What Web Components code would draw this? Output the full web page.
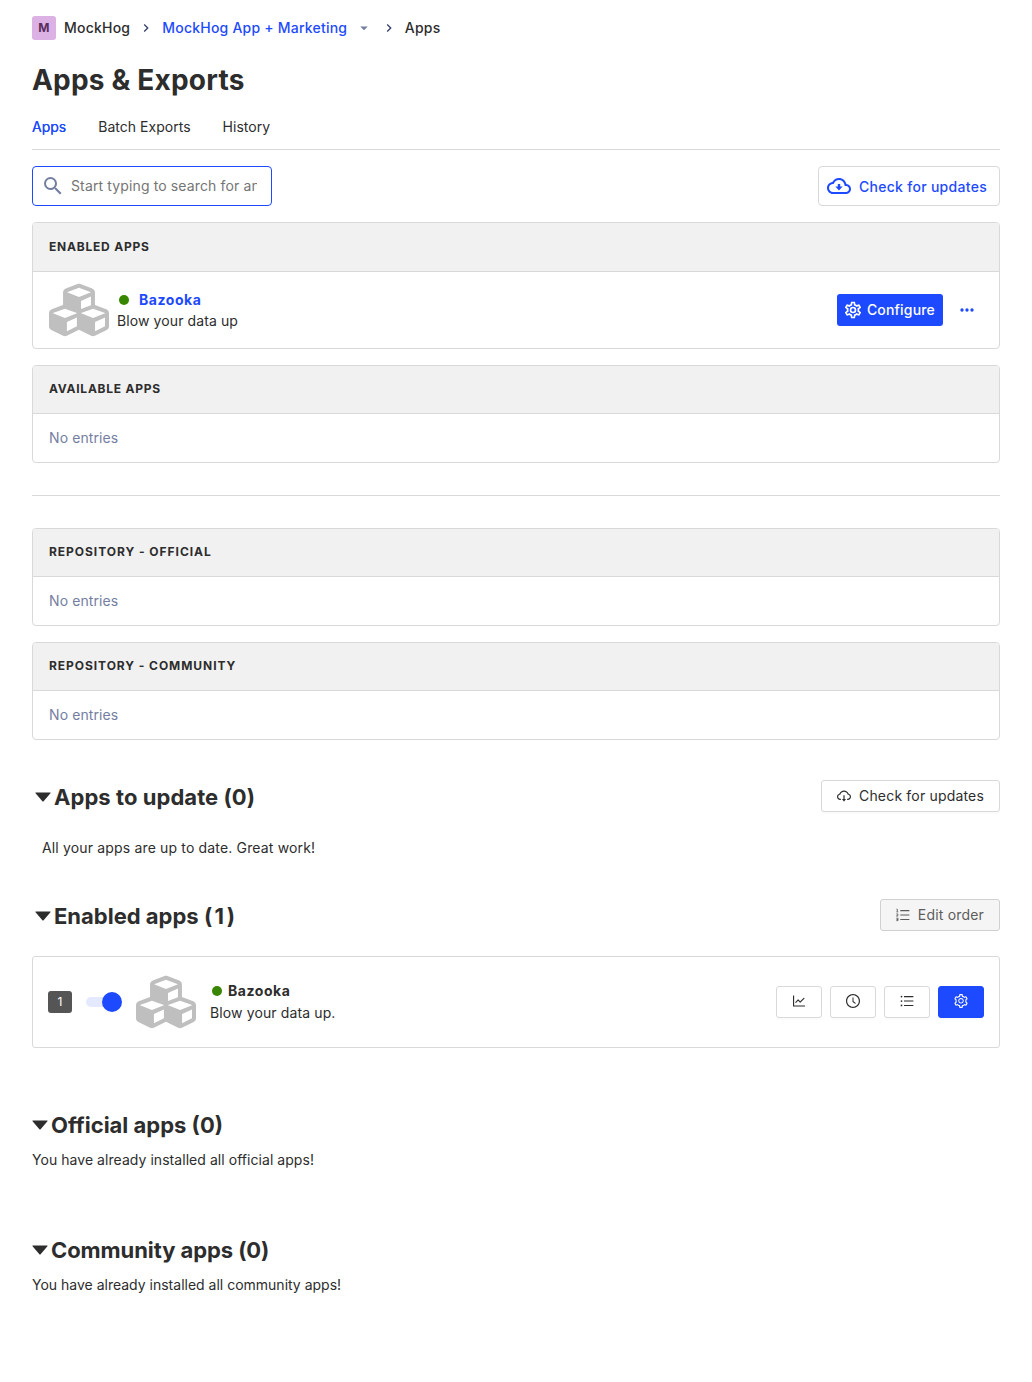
<!DOCTYPE html>
<html lang="en">
<head>
<meta charset="utf-8">
<title>Apps &amp; Exports</title>
<style>
  html { background: #fff; }
  body {
    margin: 0;
    font: 400 14px/20px Inter, "Liberation Sans", sans-serif;
    color: #2d2d2d;
    --blue: #1d4aff;
    --border: #d9d9d9;
    --muted: #747ea1;
  }
</style>
</head>
<body>
<apps-scene></apps-scene>

<script>
const define = (name, html, setup) => {
  const template = document.createElement('template');
  template.innerHTML = html;
  customElements.define(name, class extends HTMLElement {
    constructor() {
      super();
      this.attachShadow({ mode: 'open' }).append(template.content.cloneNode(true));
    }
    connectedCallback() { if (setup) setup(this, this.shadowRoot); }
  });
};

const ICONS = {
  chevron: ['0 0 24 24', '<path d="M8.6 16.6 13.2 12 8.6 7.4 10 6l6 6-6 6z"/>'],
  dropdown: ['0 0 24 24', '<path d="M7 10l5 5 5-5z"/>'],
  search: ['0 0 24 24', '<path d="M9.5 3A6.5 6.5 0 0 1 16 9.5c0 1.61-.59 3.09-1.56 4.23l.27.27h.79l5 5-1.5 1.5-5-5v-.79l-.27-.27A6.52 6.52 0 0 1 9.5 16a6.5 6.5 0 1 1 0-13m0 2C7 5 5 7 5 9.5S7 14 9.5 14 14 12 14 9.5 12 5 9.5 5z"/>'],
  cloud: ['0 0 24 24', '<path d="M19.35 10.04C18.67 6.59 15.64 4 12 4 9.11 4 6.6 5.64 5.35 8.04 2.34 8.36 0 10.91 0 14c0 3.31 2.69 6 6 6h13c2.76 0 5-2.24 5-5 0-2.64-2.05-4.78-4.65-4.96zM19 18H6c-2.21 0-4-1.79-4-4 0-2.05 1.53-3.76 3.56-3.97l1.07-.11.5-.95C8.08 7.14 9.94 6 12 6c2.62 0 4.88 1.86 5.39 4.43l.3 1.5 1.53.11c1.56.1 2.78 1.41 2.78 2.96 0 1.65-1.35 3-3 3z"/><path d="M13.2 10h-2.4v2.6H8.4L12 16.4l3.6-3.8h-2.4z"/>'],
  cog: ['0 0 24 24', '<path d="M12,8A4,4 0 0,1 16,12A4,4 0 0,1 12,16A4,4 0 0,1 8,12A4,4 0 0,1 12,8M12,10A2,2 0 0,0 10,12A2,2 0 0,0 12,14A2,2 0 0,0 14,12A2,2 0 0,0 12,10M10,22C9.75,22 9.54,21.82 9.5,21.58L9.13,18.93C8.5,18.68 7.96,18.34 7.44,17.94L4.95,18.95C4.73,19.03 4.46,18.95 4.34,18.73L2.34,15.27C2.21,15.05 2.27,14.78 2.46,14.63L4.57,12.97L4.5,12L4.57,11L2.46,9.37C2.27,9.22 2.21,8.95 2.34,8.73L4.34,5.27C4.46,5.05 4.73,4.96 4.95,5.05L7.44,6.05C7.96,5.66 8.5,5.32 9.13,5.07L9.5,2.42C9.54,2.18 9.75,2 10,2H14C14.25,2 14.46,2.18 14.5,2.42L14.87,5.07C15.5,5.32 16.04,5.66 16.56,6.05L19.05,5.05C19.27,4.96 19.54,5.05 19.66,5.27L21.66,8.73C21.79,8.95 21.73,9.22 21.54,9.37L19.43,11L19.5,12L19.43,13L21.54,14.63C21.73,14.78 21.79,15.05 21.66,15.27L19.66,18.73C19.54,18.95 19.27,19.04 19.05,18.95L16.56,17.95C16.04,18.34 15.5,18.68 14.87,18.93L14.5,21.58C14.46,21.82 14.25,22 14,22H10M11.25,4L10.88,6.61C9.68,6.86 8.62,7.5 7.85,8.39L5.44,7.35L4.69,8.65L6.8,10.2C6.4,11.37 6.4,12.64 6.8,13.8L4.68,15.36L5.43,16.66L7.86,15.62C8.63,16.5 9.68,17.14 10.87,17.38L11.24,20H12.76L13.13,17.39C14.32,17.14 15.37,16.5 16.14,15.62L18.57,16.66L19.32,15.36L17.2,13.81C17.6,12.64 17.6,11.37 17.2,10.2L19.31,8.65L18.56,7.35L16.15,8.39C15.38,7.5 14.32,6.86 13.12,6.62L12.75,4H11.25Z"/>'],
  more: ['0 0 24 24', '<circle cx="6" cy="12" r="2"/><circle cx="12" cy="12" r="2"/><circle cx="18" cy="12" r="2"/>'],
  cubes: ['0 0 512 512', '<path d="M488.6 250.2L392 214V105.5c0-15-9.3-28.4-23.4-33.7l-100-37.5c-8.1-3.1-17.1-3.1-25.3 0l-100 37.5c-14.1 5.3-23.4 18.7-23.4 33.7V214l-96.6 36.2C9.3 255.5 0 268.9 0 283.9V394c0 13.6 7.7 26.1 19.9 32.2l100 50c10.1 5.1 22.1 5.1 32.2 0l103.9-52 103.9 52c10.1 5.1 22.1 5.1 32.2 0l100-50c12.2-6.1 19.9-18.6 19.9-32.2V283.9c0-15-9.3-28.4-23.4-33.7zM358 214.8l-85 31.9v-68.2l85-37v73.3zM154 104.1l102-38.2 102 38.2v.6l-102 41.4-102-41.4v-.6zm84 291.1l-85 42.5v-79.1l85-38.8v75.4zm0-112l-102 41.4-102-41.4v-.6l102-38.2 102 38.2v.6zm240 112l-85 42.5v-79.1l85-38.8v75.4zm0-112l-102 41.4-102-41.4v-.6l102-38.2 102 38.2v.6z"/>'],
  caret: ['0 0 1024 1024', '<path d="M840.4 300H183.6c-19.7 0-30.7 20.8-18.5 35l328.4 380.8c9.4 10.9 27.5 10.9 37 0L858.9 335c12.2-14.2 1.2-35-18.5-35z"/>'],
  cloudThin: ['64 64 896 896', '<path d="M624 706.3h-74.1V464c0-4.4-3.6-8-8-8h-60c-4.4 0-8 3.6-8 8v242.3H400c-6.7 0-10.4 7.7-6.3 12.9l112 141.7a8 8 0 0012.6 0l112-141.7c4.1-5.2.4-12.9-6.3-12.9z"/><path d="M811.4 366.7C765.6 245.9 648.9 160 512.2 160S258.8 245.8 213 366.6C127.3 389.1 64 467.2 64 560c0 110.5 89.5 200 199.9 200H304c4.4 0 8-3.6 8-8v-60c0-4.4-3.6-8-8-8h-40.1c-33.7 0-65.4-13.4-89-37.7-23.5-24.2-36-56.8-34.9-90.6.9-26.4 9.9-51.2 26.2-72.1 16.7-21.3 40.1-36.8 66.1-43.7l37.9-9.9 13.9-36.6c8.6-22.8 20.6-44.1 35.7-63.4a245.6 245.6 0 0152.4-49.9c41.1-28.9 89.5-44.2 140-44.2s98.9 15.3 140 44.2c19.9 14 37.5 30.8 52.4 49.9 15.1 19.3 27.1 40.7 35.7 63.4l13.8 36.5 37.8 10C846.1 454.5 884 503.8 884 560c0 33.1-12.9 64.3-36.3 87.7a123.07 123.07 0 01-87.6 36.3H720c-4.4 0-8 3.6-8 8v60c0 4.4 3.6 8 8 8h40.1C870.5 760 960 670.5 960 560c0-92.7-63.1-170.7-148.6-193.3z"/>'],
  ordered: ['64 64 896 896', '<path d="M336 192h584v72H336zM336 476h584v72H336zM336 760h584v72H336z"/><path fill="none" stroke="currentColor" stroke-width="54" d="M92 140h56v160M84 310h124M84 446h104v60l-96 68h120M84 718h110v76h-86 86v78h-110"/>'],
  chart: ['64 64 896 896', '<path d="M888 792H200V168c0-4.4-3.6-8-8-8h-56c-4.4 0-8 3.6-8 8v688c0 4.4 3.6 8 8 8h752c4.4 0 8-3.6 8-8v-56c0-4.4-3.6-8-8-8zM305.8 637.7c3.1 3.1 8.1 3.1 11.3 0l138.3-137.6L583 628.5c3.1 3.1 8.2 3.1 11.3 0l275.4-275.3c3.1-3.1 3.1-8.2 0-11.3l-39.6-39.6a8.03 8.03 0 00-11.3 0l-230 229.9L461.4 404a8.03 8.03 0 00-11.3 0L266.3 586.7a8.03 8.03 0 000 11.3l39.5 39.7z"/>'],
  clock: ['64 64 896 896', '<path d="M512 64C264.6 64 64 264.6 64 512s200.6 448 448 448 448-200.6 448-448S759.4 64 512 64zm0 820c-205.4 0-372-166.6-372-372s166.6-372 372-372 372 166.6 372 372-166.6 372-372 372z"/><path d="M686.7 638.6L544.1 535.5V288c0-4.4-3.6-8-8-8H488c-4.4 0-8 3.6-8 8v275.4c0 2.6 1.2 5 3.3 6.5l165.4 120.6c3.6 2.6 8.6 1.8 11.2-1.7l28.6-39c2.6-3.7 1.8-8.7-1.8-11.2z"/>'],
  list: ['64 64 896 896', '<path d="M320 192h600v72H320zM320 476h600v72H320zM320 760h600v72H320z"/><circle cx="160" cy="228" r="56"/><circle cx="160" cy="512" r="56"/><circle cx="160" cy="796" r="56"/>'],
  gear: ['64 64 896 896', '<path d="M924.8 625.7l-65.5-56c3.1-19 4.7-38.4 4.7-57.8s-1.6-38.8-4.7-57.8l65.5-56a32.03 32.03 0 009.3-35.2l-.9-2.6a443.74 443.74 0 00-79.7-137.9l-1.8-2.1a32.12 32.12 0 00-35.1-9.5l-81.3 28.9c-30-24.6-63.5-44-99.7-57.6l-15.7-85a32.05 32.05 0 00-25.8-25.7l-2.7-.5c-52.1-9.4-106.9-9.4-159 0l-2.7.5a32.05 32.05 0 00-25.8 25.7l-15.8 85.4a351.86 351.86 0 00-99 57.4l-81.9-29.1a32 32 0 00-35.1 9.5l-1.8 2.1a446.02 446.02 0 00-79.7 137.9l-.9 2.6c-4.5 12.5-.8 26.5 9.3 35.2l66.3 56.6c-3.1 18.8-4.6 38-4.6 57.1 0 19.2 1.5 38.4 4.6 57.1L99 625.5a32.03 32.03 0 00-9.3 35.2l.9 2.6c18.1 50.4 44.9 96.9 79.7 137.9l1.8 2.1a32.12 32.12 0 0035.1 9.5l81.9-29.1c29.8 24.5 63.1 43.9 99 57.4l15.8 85.4a32.05 32.05 0 0025.8 25.7l2.7.5a449.4 449.4 0 00159 0l2.7-.5a32.05 32.05 0 0025.8-25.7l15.7-85a350 350 0 0099.7-57.6l81.3 28.9a32 32 0 0035.1-9.5l1.8-2.1c34.8-41.1 61.6-87.5 79.7-137.9l.9-2.6c4.5-12.3.8-26.3-9.3-35zM788.3 465.9c2.5 15.1 3.8 30.6 3.8 46.1s-1.3 31-3.8 46.1l-6.6 40.1 74.7 63.9a370.03 370.03 0 01-42.6 73.6L721 702.8l-31.4 25.8c-23.9 19.6-50.5 35-79.3 45.8l-38.1 14.3-17.9 97a377.5 377.5 0 01-85 0l-17.9-97.2-37.8-14.5c-28.5-10.8-55-26.2-78.7-45.7l-31.4-25.9-93.4 33.2c-17-22.9-31.2-47.6-42.6-73.6l75.5-64.5-6.5-40c-2.4-14.9-3.7-30.3-3.7-45.5 0-15.3 1.2-30.6 3.7-45.5l6.5-40-75.5-64.5c11.3-26.1 25.6-50.7 42.6-73.6l93.4 33.2 31.4-25.9c23.7-19.5 50.2-34.9 78.7-45.7l37.9-14.3 17.9-97.2c28.1-3.2 56.8-3.2 85 0l17.9 97 38.1 14.3c28.7 10.8 55.4 26.2 79.3 45.8l31.4 25.8 92.8-32.9c17 22.9 31.2 47.6 42.6 73.6L781.8 426l6.5 39.9zM512 326c-97.2 0-176 78.8-176 176s78.8 176 176 176 176-78.8 176-176-78.8-176-176-176zm79.2 255.2A111.6 111.6 0 01512 614c-29.9 0-58-11.7-79.2-32.8A111.6 111.6 0 01400 502c0-29.9 11.7-58 32.8-79.2C454 401.6 482.1 390 512 390c29.9 0 58 11.6 79.2 32.8A111.6 111.6 0 01624 502c0 29.9-11.7 58-32.8 79.2z"/>']
};

define('ui-icon', `<style>
  :host { display: inline-flex; flex: none; }
  svg { display: block; fill: currentColor; }
</style>`, (el, root) => {
  const [box, body] = ICONS[el.getAttribute('name')];
  const size = el.getAttribute('size') || 14;
  root.innerHTML += `<svg viewBox="${box}" width="${size}" height="${size}" aria-hidden="true">${body}</svg>`;
});

define('bread-crumbs', `<style>
  :host { display: flex; align-items: center; height: 24px; font-weight: 500; letter-spacing: .22px; }
  .badge { width: 24px; height: 24px; border-radius: 3px; background: #dcb1e3; color: #572e5e;
    font: 700 12px/24px Inter, sans-serif; text-align: center; margin-right: 8px; }
  .sep { color: #35416b; margin: 0 8px; }
  .link { color: var(--blue); }
  .drop { color: var(--muted); margin: 0 -.5px 0 8px; }
</style>
<span class="badge">M</span><span>MockHog</span>
<ui-icon class="sep" name="chevron" size="16"></ui-icon>
<span class="link">MockHog App + Marketing</span>
<ui-icon class="drop" name="dropdown" size="18"></ui-icon>
<ui-icon class="sep" name="chevron" size="16"></ui-icon>
<span>Apps</span>`);

define('tab-bar', `<style>
  :host { display: flex; gap: 32px; height: 44px; align-items: center; border-bottom: 1px solid var(--border); letter-spacing: .02px; }
  ::slotted([active]) { color: var(--blue); text-shadow: 0 0 .25px currentColor; }
</style><slot></slot>`);

define('search-field', `<style>
  :host { display: flex; align-items: center; box-sizing: border-box; width: 240px; height: 40px;
    border: 1px solid var(--blue); border-radius: 4px; padding: 0 14px 0 8px; }
  ui-icon { color: var(--muted); margin-right: 6px; }
  input { flex: 1; min-width: 0; border: 0; padding: 0; outline: 0; background: none; font: inherit; color: inherit; letter-spacing: .13px; }
  input::placeholder { color: #757575; opacity: 1; }
</style><ui-icon name="search" size="24"></ui-icon><input placeholder="Start typing to search for an app">`);

define('lemon-button', `<style>
  :host { display: inline-flex; align-items: center; box-sizing: border-box; height: 40px; gap: 8px;
    padding: 1px 12px 0 8px; border: 1px solid var(--border); border-radius: 4px; color: var(--blue); font-weight: 500; letter-spacing: .29px; }
  :host([kind=primary]) { height: 32px; gap: 4px; padding: 0 8px 0 6px; border: 0; border-radius: 3px; background: var(--blue); color: #fff; letter-spacing: .18px; }
  :host([kind=more]) { height: 32px; border: 0; padding: 0 6px; margin-left: 8px; }
  ::slotted(ui-icon[name=cloud]) { margin-bottom: 2px; }
</style><slot></slot>`);

define('ant-button', `<style>
  :host { display: inline-flex; align-items: center; justify-content: center; box-sizing: border-box; height: 32px;
    gap: 8px; padding: 0 15px; border: 1px solid var(--border); border-radius: 3px; background: #fff;
    box-shadow: 0 2px 0 rgba(0,0,0,.015); letter-spacing: .18px; }
  :host([disabled]) { background: #f5f5f5; color: #5d5d5d; border-color: #d0d0d0; box-shadow: none; }
  :host([square]) { width: 46px; padding: 0 0 2px; }
  :host([primary]) { background: var(--blue); border-color: var(--blue); color: #fff; }
</style><slot></slot>`);

define('app-table', `<style>
  :host { display: block; border: 1px solid var(--border); border-radius: 4px; overflow: hidden; }
  header { box-sizing: border-box; height: var(--head, 48px); display: flex; align-items: center; padding: 0 16px var(--drop, 2px);
    background: #f1f1f1; border-bottom: 1px solid var(--border);
    font-size: 12px; font-weight: 700; letter-spacing: var(--track, .75px); text-transform: uppercase; }
  .body { min-height: 48px; display: flex; align-items: center; padding: 0 16px; box-sizing: border-box; }
  .empty { color: var(--muted); letter-spacing: .1px; }
</style><header></header><div class="body"><slot><span class="empty">No entries</span></slot></div>`,
(el, root) => { root.querySelector('header').textContent = el.getAttribute('heading'); });

define('status-dot', `<style>
  :host { display: inline-block; width: 10px; height: 10px; border-radius: 50%; background: #388600; flex: none; }
</style>`);

define('app-row', `<style>
  :host { display: flex; flex: 1; align-items: center; height: 76px; }
  .logo { color: #bfbfbf; margin-right: 8px; }
  .info { flex: 1; display: flex; flex-direction: column; gap: 1px; letter-spacing: .1px; }
  .title { display: flex; align-items: center; gap: 10px; padding-left: 2px; color: var(--blue); font-weight: 700; letter-spacing: .55px; }
</style>
<ui-icon class="logo" name="cubes" size="60"></ui-icon>
<div class="info"><div class="title"><status-dot></status-dot><span>Bazooka</span></div><div>Blow your data up</div></div>
<lemon-button kind="primary"><ui-icon name="cog" size="20"></ui-icon><span>Configure</span></lemon-button>
<lemon-button kind="more"><ui-icon name="more" size="20"></ui-icon></lemon-button>`);

define('section-heading', `<style>
  :host { display: flex; justify-content: space-between; align-items: center; height: 32px; }
  h2 { display: flex; align-items: center; margin: 2px 0 0; font-size: 22px; line-height: 32px; font-weight: 700; white-space: pre; }
  :host([flush]) ui-icon { margin-left: -3.5px; }
  :host([flush]) h2 { gap: .5px; margin-top: 0; }
  .count { letter-spacing: var(--count-track, inherit); }
  .side { display: flex; }
</style><h2><ui-icon name="caret" size="22"></ui-icon><span><span class="label"></span><span class="count"></span></span></h2><div class="side"><slot></slot></div>`,
(el, root) => {
  root.querySelector('.label').textContent = el.getAttribute('heading') + ' ';
  root.querySelector('.count').textContent = `(${el.getAttribute('count')})`;
});

define('toggle-switch', `<style>
  :host { display: flex; align-items: center; justify-content: flex-end; width: 36px; height: 20px; }
  .track { width: 34px; height: 10px; border-radius: 5px; background: #e4e9ff; display: flex; align-items: center; justify-content: flex-end; margin-right: 2px; }
  .knob { width: 20px; height: 20px; border-radius: 50%; background: var(--blue); margin-right: -2px; flex: none; }
</style><div class="track"><div class="knob"></div></div>`);

define('app-card', `<style>
  :host { display: flex; align-items: center; box-sizing: border-box; height: 92px; padding: 0 15px; border: 1px solid var(--border); border-radius: 3px; }
  .order { width: 24px; height: 22px; border-radius: 3px; background: #555; color: #fff; font-size: 12px; line-height: 22px; text-align: center; }
  toggle-switch { margin: 0 14px; }
  .logo { color: #bfbfbf; margin-right: 14px; }
  .info { flex: 1; display: flex; flex-direction: column; gap: 2px; letter-spacing: .12px; }
  .title { display: flex; align-items: center; gap: 6px; padding-left: 2px; font-weight: 700; letter-spacing: .55px; }
  .actions { display: flex; gap: 8px; }
</style>
<span class="order">1</span><toggle-switch></toggle-switch>
<ui-icon class="logo" name="cubes" size="60"></ui-icon>
<div class="info"><div class="title"><status-dot></status-dot><span>Bazooka</span></div><div>Blow your data up.</div></div>
<div class="actions">
  <ant-button square><ui-icon name="chart"></ui-icon></ant-button>
  <ant-button square><ui-icon name="clock"></ui-icon></ant-button>
  <ant-button square><ui-icon name="list"></ui-icon></ant-button>
  <ant-button square primary><ui-icon name="gear"></ui-icon></ant-button>
</div>`);

define('apps-scene', `<style>
  :host { display: block; box-sizing: border-box; min-height: 1382px; padding: 16px 32px; }
  h1 { margin: 20px 0 5px; font-size: 28px; line-height: 40px; font-weight: 700; letter-spacing: .2px; }
  p { margin: 0; }
  .tools { display: flex; justify-content: space-between; margin: 16px 0; }
  .tables { display: flex; flex-direction: column; gap: 16px; }
  hr { border: 0; border-top: 1px solid var(--border); margin: 32px 0; }
  .update { margin-top: 40px; letter-spacing: .06px; }
  .uptodate { margin: 26px 10px 0; letter-spacing: .16px; }
  .enabled { margin-top: 41px; --count-track: 2.4px; }
  app-card { margin-top: 25px; }
  .official { margin-top: 61px; }
  .community { margin-top: 64px; letter-spacing: -.08px; }
  .done { margin-top: 9px; }
</style>
<bread-crumbs></bread-crumbs>
<h1>Apps &amp; Exports</h1>
<tab-bar><span active>Apps</span><span>Batch Exports</span><span>History</span></tab-bar>
<div class="tools"><search-field></search-field>
  <lemon-button><ui-icon name="cloud" size="24"></ui-icon><span>Check for updates</span></lemon-button></div>
<div class="tables">
  <app-table heading="Enabled apps" style="--head:49px; --drop:0px; --track:.78px"><app-row></app-row></app-table>
  <app-table heading="Available apps"></app-table>
</div>
<hr>
<div class="tables">
  <app-table heading="Repository - Official" style="--track:.96px"></app-table>
  <app-table heading="Repository - Community" style="--track:.94px"></app-table>
</div>
<section-heading class="update" heading="Apps to update" count="0"><ant-button><ui-icon name="cloudThin"></ui-icon><span>Check for updates</span></ant-button></section-heading>
<p class="uptodate">All your apps are up to date. Great work!</p>
<section-heading class="enabled" heading="Enabled apps" count="1"><ant-button disabled><ui-icon name="ordered"></ui-icon><span>Edit order</span></ant-button></section-heading>
<app-card></app-card>
<section-heading class="official" flush heading="Official apps" count="0"></section-heading>
<p class="done" style="letter-spacing:.05px">You have already installed all official apps!</p>
<section-heading class="community" flush heading="Community apps" count="0"></section-heading>
<p class="done">You have already installed all community apps!</p>`);
</script>
</body>
</html>
